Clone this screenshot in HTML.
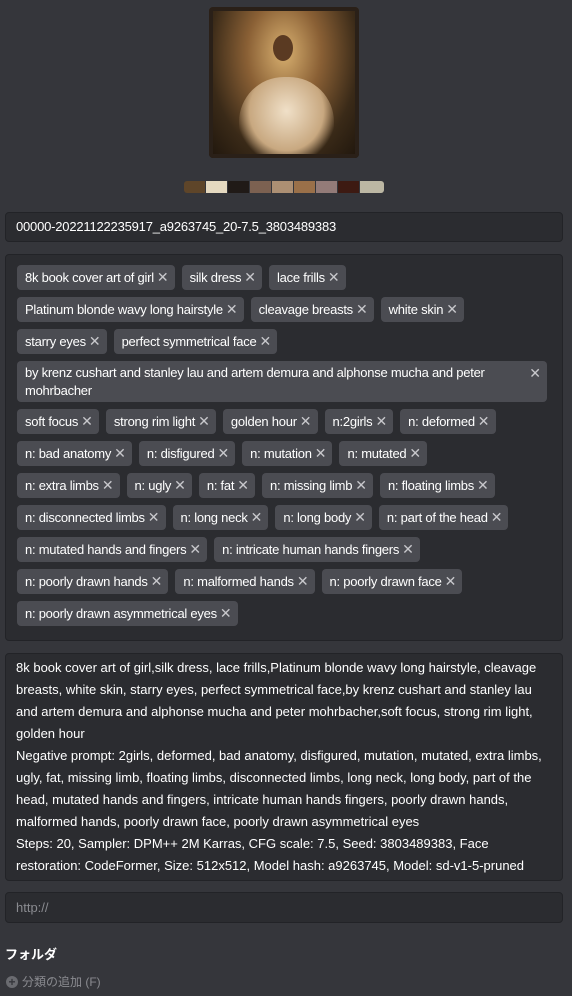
<!DOCTYPE html>
<html><head><meta charset="utf-8"><style>
*{box-sizing:border-box;margin:0;padding:0}
body{width:572px;height:996px;background:#35363b;font-family:"Liberation Sans","Noto Sans CJK JP",sans-serif;color:#fff;font-size:13px;position:relative;overflow:hidden}
.img{position:absolute;left:209px;top:7px;width:150px;height:151px;border-radius:4px;overflow:hidden;background:radial-gradient(ellipse at 50% 30%,#d8b070 0%,#8a6035 35%,#3a2a18 70%,#1e150c 100%)}
.img .fig{position:absolute;left:30px;top:70px;width:95px;height:85px;border-radius:45px 45px 10px 10px;background:radial-gradient(ellipse at 50% 40%,#f0e0c8,#c8a880 55%,transparent 75%)}
.img .hd{position:absolute;left:64px;top:28px;width:20px;height:26px;border-radius:50%;background:#5a3a22}
.img .fr{position:absolute;inset:0;border:4px solid #2a2018;border-radius:4px}
.pal{position:absolute;left:184px;top:181px;display:flex;border-radius:3px;overflow:hidden}
.pal i{display:block;width:21px;height:12px;margin-right:1px}
.box{position:absolute;left:5px;width:558px;background:#2b2c30;border:1px solid #222327;border-radius:4px}
.fn{top:212px;height:30px;padding:6px 10px;font-size:13px;letter-spacing:-0.2px}
.tags{top:254px;height:387px;padding:10px 11px;display:flex;flex-wrap:wrap;align-content:flex-start;gap:0 7px}
.br{flex-basis:100%;height:0}
.t{background:#4b4c52;border-radius:4px;height:25px;line-height:25px;padding:0 6px 0 8px;white-space:nowrap;letter-spacing:-0.25px;margin-bottom:7px}
.t b{font-weight:normal;color:#c8c8cc;margin-left:3px;font-size:14px;letter-spacing:0}
.t.w{width:530px;height:41px;line-height:18px;padding:3px 8px;white-space:normal;position:relative;padding-right:30px}
.t.w b{position:absolute;right:6px;top:3px}
.ta{top:653px;height:228px;padding:3px 10px;line-height:22px;font-size:13px}
.url{top:892px;height:31px;padding:7px 10px;color:#8a8b90}
.fo{position:absolute;left:5px;top:944px;font-weight:bold;font-size:13px}
.add{position:absolute;left:6px;top:973px;color:#8a8b90;font-size:12px;display:flex;align-items:center}
.add span{display:inline-block;width:12px;height:12px;border-radius:50%;background:#6a6b70;color:#35363b;font-size:12px;line-height:12px;text-align:center;margin-right:4px;font-weight:bold}
</style></head><body>
<div class="img"><div class="fig"></div><div class="hd"></div><div class="fr"></div></div>
<div class="pal"><i style="background:#5e4529"></i><i style="background:#e5d9c0"></i><i style="background:#201a17"></i><i style="background:#7c6151"></i><i style="background:#ac8f73"></i><i style="background:#9a7049"></i><i style="background:#937b78"></i><i style="background:#3d1a12"></i><i style="background:#bcb7a3;width:24px;margin:0"></i></div>
<div class="box fn">00000-20221122235917_a9263745_20-7.5_3803489383</div>
<div class="box tags">
<span class="t">8k book cover art of girl<b>✕</b></span><span class="t">silk dress<b>✕</b></span><span class="t">lace frills<b>✕</b></span><i class="br"></i>
<span class="t">Platinum blonde wavy long hairstyle<b>✕</b></span><span class="t">cleavage breasts<b>✕</b></span><span class="t">white skin<b>✕</b></span><i class="br"></i>
<span class="t">starry eyes<b>✕</b></span><span class="t">perfect symmetrical face<b>✕</b></span><i class="br"></i>
<span class="t w">by krenz cushart and stanley lau and artem demura and alphonse mucha and peter mohrbacher<b>✕</b></span><i class="br"></i>
<span class="t">soft focus<b>✕</b></span><span class="t">strong rim light<b>✕</b></span><span class="t">golden hour<b>✕</b></span><span class="t">n:2girls<b>✕</b></span><span class="t">n: deformed<b>✕</b></span><i class="br"></i>
<span class="t">n: bad anatomy<b>✕</b></span><span class="t">n: disfigured<b>✕</b></span><span class="t">n: mutation<b>✕</b></span><span class="t">n: mutated<b>✕</b></span><i class="br"></i>
<span class="t">n: extra limbs<b>✕</b></span><span class="t">n: ugly<b>✕</b></span><span class="t">n: fat<b>✕</b></span><span class="t">n: missing limb<b>✕</b></span><span class="t">n: floating limbs<b>✕</b></span><i class="br"></i>
<span class="t">n: disconnected limbs<b>✕</b></span><span class="t">n: long neck<b>✕</b></span><span class="t">n: long body<b>✕</b></span><span class="t">n: part of the head<b>✕</b></span><i class="br"></i>
<span class="t">n: mutated hands and fingers<b>✕</b></span><span class="t">n: intricate human hands fingers<b>✕</b></span><i class="br"></i>
<span class="t">n: poorly drawn hands<b>✕</b></span><span class="t">n: malformed hands<b>✕</b></span><span class="t">n: poorly drawn face<b>✕</b></span><i class="br"></i>
<span class="t">n: poorly drawn asymmetrical eyes<b>✕</b></span>
</div>
<div class="box ta">8k book cover art of girl,silk dress, lace frills,Platinum blonde wavy long hairstyle, cleavage breasts, white skin, starry eyes, perfect symmetrical face,by krenz cushart and stanley lau and artem demura and alphonse mucha and peter mohrbacher,soft focus, strong rim light, golden hour<br>Negative prompt: 2girls, deformed, bad anatomy, disfigured, mutation, mutated, extra limbs, ugly, fat, missing limb, floating limbs, disconnected limbs, long neck, long body, part of the head, mutated hands and fingers, intricate human hands fingers, poorly drawn hands, malformed hands, poorly drawn face, poorly drawn asymmetrical eyes<br>Steps: 20, Sampler: DPM++ 2M Karras, CFG scale: 7.5, Seed: 3803489383, Face restoration: CodeFormer, Size: 512x512, Model hash: a9263745, Model: sd-v1-5-pruned</div>
<div class="box url">http://</div>
<div class="fo">フォルダ</div>
<div class="add"><span>+</span>分類の追加 (F)</div>
</body></html>
